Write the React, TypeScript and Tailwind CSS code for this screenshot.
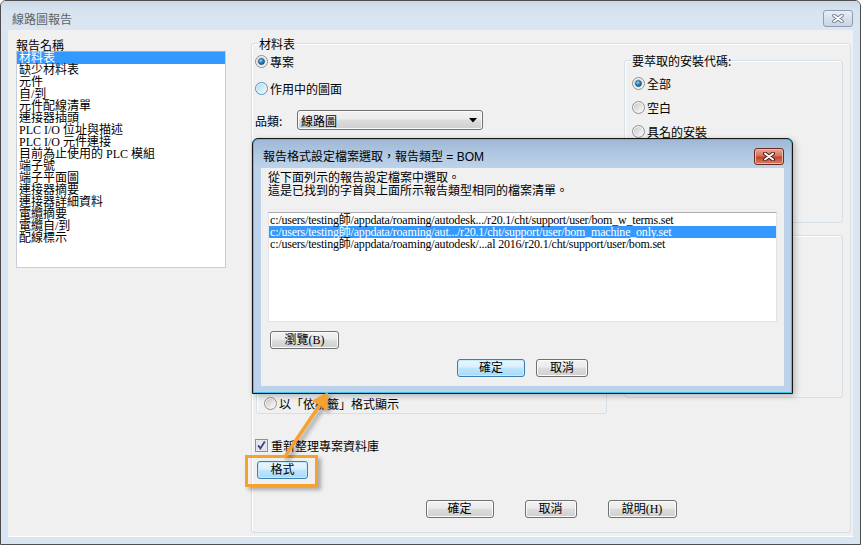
import { useId } from 'react';

const cjk = "font-['Noto_Sans_CJK_TC','Noto_Sans_CJK_SC',sans-serif]";
const ming = "font-['Liberation_Serif','Noto_Sans_CJK_TC',serif]";
const ui = "font-['Liberation_Sans','Noto_Sans_CJK_TC',sans-serif]";

const reports = [
    '材料表',
    '缺少材料表',
    '元件',
    '自/到',
    '元件配線清單',
    '連接器插頭',
    'PLC I/O 位址與描述',
    'PLC I/O 元件連接',
    '目前為止使用的 PLC 模組',
    '端子號',
    '端子平面圖',
    '連接器摘要',
    '連接器詳細資料',
    '電纜摘要',
    '電纜自/到',
    '配線標示',
];

const files = [
    'c:/users/testing師/appdata/roaming/autodesk.../r20.1/cht/support/user/bom_w_terms.set',
    'c:/users/testing師/appdata/roaming/aut.../r20.1/cht/support/user/bom_machine_only.set',
    'c:/users/testing師/appdata/roaming/autodesk/...al 2016/r20.1/cht/support/user/bom.set',
];

function Radio({ checked = false, hot = false }: { checked?: boolean; hot?: boolean }) {
    const id = useId().replace(/:/g, '');
    return (
        <svg width="13" height="13" viewBox="0 0 13 13" className="block shrink-0">
            <defs>
                <linearGradient id={`f${id}`} x1="0" y1="0" x2="1" y2="1">
                    <stop offset="0" stopColor={hot ? '#a9dcf6' : '#c9c9c9'} />
                    <stop offset="1" stopColor={hot ? '#eef9ff' : '#fbfbfb'} />
                </linearGradient>
                <radialGradient id={`d${id}`} cx="0.38" cy="0.35" r="0.75">
                    <stop offset="0" stopColor="#9ad8f8" />
                    <stop offset="0.45" stopColor="#2a88c9" />
                    <stop offset="1" stopColor="#0f3f6b" />
                </radialGradient>
            </defs>
            <circle cx="6.5" cy="6.5" r="6" fill="#f3f3f3" stroke={hot ? '#4a95cc' : '#8f8f8f'} />
            <circle cx="6.5" cy="6.5" r="4.6" fill={`url(#f${id})`} />
            {checked && <circle cx="6.5" cy="6.5" r="3.1" fill={`url(#d${id})`} stroke="#1c4a72" strokeWidth="0.6" />}
        </svg>
    );
}

function Check() {
    return (
        <svg width="13" height="13" viewBox="0 0 13 13" className="block shrink-0">
            <rect x="0.5" y="0.5" width="12" height="12" fill="#f4f4f4" stroke="#8e8f8f" />
            <rect x="2" y="2" width="9" height="9" fill="#e9ecef" stroke="#c6cbd1" strokeWidth="0.6" />
            <path d="M3.2 6.4 L5.4 9.4 L9.8 2.6" fill="none" stroke="#34448c" strokeWidth="1.8" />
        </svg>
    );
}

function Btn({ label, w, blue = false }: { label: string; w: string; blue?: boolean }) {
    return (
        <div
            className={`${w} h-[18px] rounded-[3px] border flex items-center justify-center text-[12px] leading-none text-black ${ming} ${
                blue
                    ? 'border-[#3c7fb1] bg-[linear-gradient(#eaf6fd_0%,#d9f0fc_45%,#bee6fd_50%,#a7d9f5_100%)] shadow-[inset_0_0_0_1px_#c6ecfc]'
                    : 'border-[#707070] bg-[linear-gradient(#f2f2f2_0%,#ebebeb_45%,#dddddd_50%,#cfcfcf_100%)] shadow-[inset_0_0_0_1px_#fbfbfb]'
            }`}
        >
            {label}
        </div>
    );
}

function GroupBox({ label, className = '', children }: { label?: string; className?: string; children?: React.ReactNode }) {
    return (
        <div className={`relative border border-[#d5dfe5] rounded-[3px] shadow-[inset_1px_1px_0_#ffffff] ${className}`}>
            {label && (
                <span className={`absolute -top-[7px] left-[6px] px-[1px] bg-[#f0f0f0] text-[12px] leading-[13px] text-black ${cjk}`}>
                    {label}
                </span>
            )}
            {children}
        </div>
    );
}

function RadioRow({ label, checked, hot }: { label: string; checked?: boolean; hot?: boolean }) {
    return (
        <div className="flex items-center gap-[2px] h-[13px]">
            <Radio checked={checked} hot={hot} />
            <span className={`text-[12px] leading-[13px] text-black ${cjk}`}>{label}</span>
        </div>
    );
}

export default function App() {
    return (
        <div className="relative w-[862px] h-[545px] bg-white overflow-hidden">
            <div className="w-[861px] h-[545px] border border-[#4d4d4d] rounded-t-[6px] bg-[#dae5f2] flex flex-col">
                {/* title bar */}
                <div className="h-[29px] shrink-0 flex justify-between pl-[11px] pr-[7px] rounded-t-[5px] bg-[linear-gradient(#cbd9e9,#d8e3f0_35%,#dbe6f2)]">
                    <span className={`mt-[11px] text-[12px] leading-[14px] text-[#5f6368] ${cjk}`}>線路圖報告</span>
                    <div className="mt-[9px] w-[30px] h-[17px] rounded-[3px] border border-[#8d9db3] bg-[linear-gradient(#e9eff6,#d6e0ec_50%,#c9d5e3)] flex items-center justify-center">
                        <svg width="12" height="9" viewBox="0 0 12 9">
                            <path d="M2 1.5 L10 7.5 M10 1.5 L2 7.5" stroke="#6d7b8e" strokeWidth="3.6" strokeLinecap="round" />
                            <path d="M2 1.5 L10 7.5 M10 1.5 L2 7.5" stroke="#ffffff" strokeWidth="1.8" strokeLinecap="round" />
                        </svg>
                    </div>
                </div>

                {/* client */}
                <div className="mx-[7px] h-[507px] bg-[#f0f0f0] flex border-b border-[#ffffff]">
                    {/* left: report names */}
                    <div className="ml-[8px] pt-[8px] w-[210px] shrink-0">
                        <div className={`text-[12px] leading-[13px] text-black ${cjk}`}>報告名稱</div>
                        <div className="h-[217px] bg-white border border-[#c7ced8] border-t-[#abadb3]">
                            {reports.map((r, i) => (
                                <div
                                    key={r}
                                    className={`h-[12px] pl-[2px] text-[12px] leading-[12px] whitespace-nowrap ${ming} ${
                                        i === 0 ? 'bg-[#3399ff] text-white' : 'text-black'
                                    }`}
                                >
                                    {r}
                                </div>
                            ))}
                        </div>
                    </div>

                    {/* right: group box 材料表 */}
                    <GroupBox label="材料表" className="ml-[25px] mt-[13px] w-[600px] h-[490px]">
                        <div className="flex pl-[3px]">
                            {/* left column */}
                            <div className="w-[351px] flex flex-col">
                                <div className="mt-[11px]">
                                    <RadioRow label="專案" checked />
                                </div>
                                <div className="mt-[14px]">
                                    <RadioRow label="作用中的圖面" hot />
                                </div>
                                <div className="mt-[15px] flex items-center h-[20px]">
                                    <span className={`w-[42px] text-[12px] leading-[13px] text-black ${cjk}`}>品類:</span>
                                    <div className="w-[186px] h-[20px] rounded-[3px] border border-[#707070] bg-[linear-gradient(#f2f2f2_0%,#ebebeb_45%,#dddddd_50%,#cfcfcf_100%)] shadow-[inset_0_0_0_1px_#fbfbfb] flex items-center justify-between pl-[3px] pr-[5px]">
                                        <span className={`text-[12px] leading-[13px] text-black ${cjk}`}>線路圖</span>
                                        <svg width="8" height="5" viewBox="0 0 8 5">
                                            <path d="M0 0 H8 L4 4.5 Z" fill="#000" />
                                        </svg>
                                    </div>
                                </div>
                                <GroupBox className="mt-[15px] ml-[1px] w-[351px] h-[269px] flex flex-col justify-end pb-[3px] pl-[7px]">
                                    <RadioRow label="以「依標籤」格式顯示" />
                                </GroupBox>
                                <div className="mt-[25px] flex items-center gap-[3px] h-[13px]">
                                    <Check />
                                    <span className={`text-[12px] leading-[13px] text-black ${cjk}`}>重新整理專案資料庫</span>
                                </div>
                                <div className="mt-[9px] ml-[2px]">
                                    <Btn label="格式" w="w-[51px]" blue />
                                </div>
                            </div>

                            {/* right column */}
                            <div className="ml-[18px] w-[219px] flex flex-col">
                                <GroupBox label="要萃取的安裝代碼:" className="mt-[16px] h-[163px] pl-[7px] pt-[16px]">
                                    <div className="flex flex-col gap-[11px]">
                                        <RadioRow label="全部" checked />
                                        <RadioRow label="空白" />
                                        <RadioRow label="具名的安裝" />
                                    </div>
                                </GroupBox>
                                <GroupBox className="mt-[12px] h-[163px]" />
                            </div>
                        </div>

                        <div className="mt-[21px] flex justify-center gap-[31px]">
                            <Btn label="確定" w="w-[68px]" />
                            <Btn label="取消" w="w-[52px]" />
                            <Btn label="說明(H)" w="w-[69px]" />
                        </div>
                    </GroupBox>
                </div>
            </div>

            {/* modal dialog */}
            <div className="absolute left-[252px] top-[138px] w-[541px] h-[256px] border border-[#151515] rounded-t-[6px] bg-[#3fc6ea] p-[1px] shadow-[2px_2px_6px_rgba(0,0,0,0.25)]">
                <div className="w-full h-full rounded-t-[5px] bg-[#bcd2ea] flex flex-col">
                    <div className="h-[28px] shrink-0 rounded-t-[5px] bg-[linear-gradient(#9fb8d5,#b2c9e3_55%,#bdd2ea)] flex justify-between pl-[9px] pr-[7px]">
                        <span className={`mt-[10px] text-[12px] leading-[14px] text-black ${ui}`}>報告格式設定檔案選取，報告類型 = BOM</span>
                        <div className="mt-[8px] w-[30px] h-[17px] rounded-[3px] border border-[#6b2a1e] bg-[linear-gradient(#eaa79a,#d8705c_45%,#c4442b_55%,#d6806b)] shadow-[inset_0_0_0_1px_#f0b8aa] flex items-center justify-center">
                            <svg width="12" height="9" viewBox="0 0 12 9">
                                <path d="M2 1.5 L10 7.5 M10 1.5 L2 7.5" stroke="#4a1a12" strokeWidth="3.8" strokeLinecap="round" />
                                <path d="M2 1.5 L10 7.5 M10 1.5 L2 7.5" stroke="#ffffff" strokeWidth="2" strokeLinecap="round" />
                            </svg>
                        </div>
                    </div>
                    <div className="mx-[7px] h-[218px] bg-[#f0f0f0] flex flex-col">
                        <div className={`pl-[7px] pt-[2px] text-[12px] leading-[13px] text-black ${cjk}`}>
                            <div>從下面列示的報告設定檔案中選取。</div>
                            <div>這是已找到的字首與上面所示報告類型相同的檔案清單。</div>
                        </div>
                        <div className="mt-[16px] ml-[7px] w-[509px] h-[110px] bg-white border border-[#dfe4ea] border-t-[#abadb3]">
                            <div className="pt-[1px]">
                                {files.map((f, i) => (
                                    <div
                                        key={f}
                                        className={`h-[12px] pl-[1px] text-[12px] leading-[12px] whitespace-nowrap tracking-[-0.2px] ${ming} ${
                                            i === 1 ? 'bg-[#3399ff] text-white' : 'text-black'
                                        }`}
                                    >
                                        {f}
                                    </div>
                                ))}
                            </div>
                        </div>
                        <div className="mt-[9px] ml-[9px]">
                            <Btn label="瀏覽(B)" w="w-[69px]" />
                        </div>
                        <div className="mt-[10px] flex justify-center gap-[11px]">
                            <Btn label="確定" w="w-[68px]" blue />
                            <Btn label="取消" w="w-[52px]" />
                        </div>
                    </div>
                </div>
            </div>

            {/* annotation: highlight box + arrow */}
            <div className="absolute left-[245px] top-[455px] w-[73px] h-[32px] border-[3px] border-[#f7a230] shadow-[3px_3px_4px_rgba(0,0,0,0.3)]" />
            <svg
                className="absolute left-[260px] top-[380px] drop-shadow-[3px_3px_2px_rgba(0,0,0,0.35)]"
                width="90"
                height="90"
                viewBox="0 0 90 90"
            >
                <path d="M24 78 L59.4 25.5" stroke="#f7a230" strokeWidth="3.5" />
                <polygon points="68,12 67,30.4 51.8,20.6" fill="#f7a230" />
            </svg>
        </div>
    );
}
